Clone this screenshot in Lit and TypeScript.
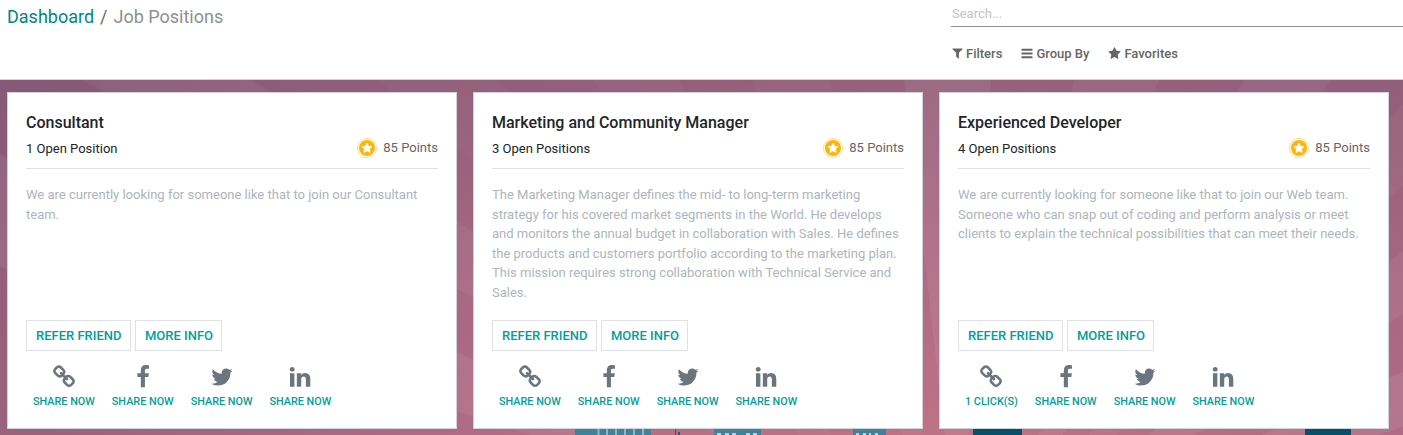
import { LitElement, html, svg, css } from "lit";
import { customElement, property } from "lit/decorators.js";

const ICONS: Record<string, string> = {
  link: "M1520 1216q0-40-28-68l-208-208q-28-28-68-28-42 0-72 32 3 3 19 18.5t21.5 21.5 15 19 13 25.5 3.5 27.5q0 40-28 68t-68 28q-15 0-27.5-3.5t-25.5-13-19-15-21.5-21.5-18.5-19q-33 31-33 73 0 40 28 68l206 207q27 27 68 27 40 0 68-26l147-146q28-28 28-67zm-703-705q0-40-28-68l-206-207q-28-28-68-28-39 0-68 27l-147 146q-28 28-28 67 0 40 28 68l208 208q27 27 68 27 42 0 72-31-3-3-19-18.5t-21.5-21.5-15-19-13-25.5-3.5-27.5q0-40 28-68t68-28q15 0 27.5 3.5t25.5 13 19 15 21.5 21.5 18.5 19q33-31 33-73zm895 705q0 120-85 203l-147 146q-83 83-203 83-121 0-204-85l-206-207q-83-83-83-203 0-123 88-209l-88-88q-86 88-208 88-120 0-204-84l-208-208q-84-84-84-204t85-203l147-146q83-83 203-83 121 0 204 85l206 207q83 83 83 203 0 123-88 209l88 88q86-88 208-88 120 0 204 84l208 208q84 84 84 204z",
  facebook: "M1343 12v264h-157q-86 0-116 36t-30 108v189h293l-39 296h-254v759h-306v-759h-255v-296h255v-218q0-186 104-288.5t277-102.5q147 0 228 12z",
  twitter: "M1684 408q-67 98-162 167 1 14 1 42 0 130-38 259.5t-115.5 248.5-184.5 210.5-258 146-323 54.5q-271 0-496-145 35 4 78 4 225 0 401-138-105-2-188-64.5t-114-159.5q33 5 61 5 43 0 85-11-112-23-185.5-111.5t-73.5-205.5v-4q68 38 146 41-66-44-105-115t-39-154q0-88 44-163 121 149 294.5 238.5t371.5 99.5q-8-38-8-74 0-134 94.5-228.5t228.5-94.5q140 0 236 102 109-21 205-78-37 115-142 178 93-10 186-50z",
  linkedin: "M477 625v991h-330v-991h330zm21-306q1 73-50.5 122t-135.5 49h-2q-82 0-132-49t-50-122q0-74 51.5-122.5t134.5-48.5 133 48.5 51 122.5zm1166 729v568h-329v-530q0-105-40.5-164.5t-126.5-59.5q-63 0-105.5 34.5t-63.5 85.5q-11 30-11 81v553h-329q2-399 2-647t-1-296l-1-48h329v144h-2q20-32 41-56t56.5-52 87-43.5 114.5-15.5q171 0 275 113.5t104 332.5z",
  filter: "M1595 295q17 41-14 70l-493 493v742q0 42-39 59-13 5-25 5-27 0-45-19l-256-256q-19-19-19-45v-486l-493-493q-31-29-14-70 17-39 59-39h1280q42 0 59 39z",
  bars: "M1664 1344v128q0 26-19 45t-45 19h-1408q-26 0-45-19t-19-45v-128q0-26 19-45t45-19h1408q26 0 45 19t19 45zm0-512v128q0 26-19 45t-45 19h-1408q-26 0-45-19t-19-45v-128q0-26 19-45t45-19h1408q26 0 45 19t19 45zm0-512v128q0 26-19 45t-45 19h-1408q-26 0-45-19t-19-45v-128q0-26 19-45t45-19h1408q26 0 45 19t19 45z",
  star: "M1728 647q0 22-26 48l-363 354 86 500q1 7 1 20 0 21-10.5 35.5t-30.5 14.5q-19 0-40-12l-449-236-449 236q-22 12-40 12-21 0-31.5-14.5t-10.5-35.5q0-6 2-20l86-500-364-354q-25-27-25-48 0-37 56-46l502-73 225-455q19-41 49-41t49 41l225 455 502 73q56 9 56 46z",
};

// Horizontal extent of each toolbar glyph inside its 1792-unit em.
const BOXES: Record<string, string> = {
  filter: "192 64 1408 1792",
  bars: "128 0 1536 1792",
  star: "64 0 1664 1792",
};

const icon = (name: string) => html`
  <svg class="icon ${name}" viewBox=${BOXES[name] ?? "0 0 1792 1792"} aria-hidden="true">
    ${svg`<path fill="currentColor" d=${ICONS[name]}></path>`}
  </svg>
`;

interface Job {
  title: string;
  open: string;
  text: string;
  linkLabel: string;
}

const JOBS: Job[] = [
  {
    title: "Consultant",
    open: "1 Open Position",
    text: "We are currently looking for someone like that to join our Consultant team.",
    linkLabel: "SHARE NOW",
  },
  {
    title: "Marketing and Community Manager",
    open: "3 Open Positions",
    text: "The Marketing Manager defines the mid- to long-term marketing strategy for his covered market segments in the World. He develops and monitors the annual budget in collaboration with Sales. He defines the products and customers portfolio according to the marketing plan. This mission requires strong collaboration with Technical Service and Sales.",
    linkLabel: "SHARE NOW",
  },
  {
    title: "Experienced Developer",
    open: "4 Open Positions",
    text: "We are currently looking for someone like that to join our Web team. Someone who can snap out of coding and perform analysis or meet clients to explain the technical possibilities that can meet their needs.",
    linkLabel: "1 CLICK(S)",
  },
];

@customElement("job-card")
class JobCard extends LitElement {
  @property({ attribute: false }) job!: Job;

  static styles = css`
    :host {
      display: flex;
      flex-direction: column;
      box-sizing: border-box;
      height: 337px;
      padding: 18px;
      border: 1px solid #ced4da;
      background: #fff;
      font: 13px/19.5px Roboto, sans-serif;
      color: #212529;
    }
    .title {
      margin: 2px 0 0;
      font-size: 16px;
      line-height: 20px;
      font-weight: 500;
    }
    .meta {
      display: flex;
      justify-content: space-between;
      align-items: center;
      height: 34px;
      padding-bottom: 1px;
      border-bottom: 1px solid #dee2e6;
    }
    .open { padding-bottom: 3px; }
    .points {
      display: flex;
      align-items: center;
      gap: 6.5px;
      color: #666;
      padding-bottom: 4px;
    }
    .badge { width: 20px; height: 20px; }
    .text {
      flex: 1;
      margin: 16px 0 0;
      color: #adb5bd;
    }
    .actions { display: flex; gap: 4px; }
    .button {
      box-sizing: border-box;
      height: 31px;
      padding: 0 8.4px 0 9px;
      border: 1px solid #dee2e6;
      background: #fff;
      color: #00a09d;
      font: 500 13px/29px Roboto, sans-serif;
    }
    .shares {
      display: flex;
      gap: 3px;
      padding: 13.5px 0 0;
      height: 45.5px;
    }
    .share {
      display: flex;
      flex-direction: column;
      align-items: center;
      padding: 0 7px;
      color: #6c757d;
    }
    .icon { display: block; width: 24px; height: 24px; }
    .label {
      margin-top: 5.5px;
      color: #00a09d;
      font-size: 10.83px;
      line-height: 16px;
      font-weight: 500;
    }
  `;

  render() {
    const { title, open, text, linkLabel } = this.job;
    const shares = [
      ["link", linkLabel],
      ["facebook", "SHARE NOW"],
      ["twitter", "SHARE NOW"],
      ["linkedin", "SHARE NOW"],
    ];
    return html`
      <h5 class="title">${title}</h5>
      <div class="meta">
        <span class="open">${open}</span>
        <span class="points">
          <svg class="badge" viewBox="0 0 20 20" aria-hidden="true">
            <circle cx="10" cy="10" r="9.5" fill="#fff" stroke="#fcd978" stroke-width=".9"></circle>
            <circle cx="10" cy="10" r="8" fill="#fdb60d"></circle>
            <path d="M10 5.300l1.45 3 3.300.45-2.400 2.300.6 3.300L10 12.750l-2.950 1.600.6-3.300-2.400-2.300 3.300-.45z"
              fill="#fff" stroke="#fff" stroke-width=".9" stroke-linejoin="round"></path>
          </svg>
          85 Points
        </span>
      </div>
      <p class="text">${text}</p>
      <div class="actions">
        <button class="button">REFER FRIEND</button>
        <button class="button">MORE INFO</button>
      </div>
      <div class="shares">
        ${shares.map(([name, label]) => html`
          <div class="share">${icon(name)}<span class="label">${label}</span></div>
        `)}
      </div>
    `;
  }
}

@customElement("app-root")
class AppRoot extends LitElement {
  static styles = css`
    :host {
      display: flex;
      flex-direction: column;
      height: 435px;
      overflow: hidden;
      background: #fff;
      font: 13px/20px Roboto, sans-serif;
      color: #666;
    }
    .panel {
      box-sizing: border-box;
      flex: none;
      display: grid;
      grid-template-columns: 951px 1fr;
      height: 80px;
      border-bottom: 1px solid #ced4da;
    }
    .crumbs {
      display: flex;
      padding: 4px 0 0 7px;
      font-size: 18px;
      line-height: 26px;
    }
    .crumb { color: #008784; }
    .slash { padding: 0 6px; }
    .current { color: #8f8f8f; }
    .search {
      box-sizing: border-box;
      height: 27px;
      padding: 4px 1px 0;
      border-bottom: 1px solid #8f8f8f;
      color: #c4c4c4;
    }
    .options {
      display: flex;
      gap: 19px;
      padding: 17px 0 0 1px;
      font-weight: 500;
    }
    .option { display: flex; align-items: center; gap: 3px; }
    .icon { display: block; height: 13px; margin-bottom: 1px; }
    .filter { width: 11px; }
    .bars { width: 12px; }
    .star { width: 13px; }
    .scene {
      flex: 1;
      display: grid;
      grid-template: 355px / 1403px;
    }
    .backdrop, .cards { grid-area: 1 / 1; }
    .backdrop {
      display: flex;
      align-items: flex-end;
      background:
        conic-gradient(from -90deg at 960px 490px,
          transparent 17.4deg, #ffffff10 17.6deg 23.3deg, transparent 23.5deg 29.1deg,
          #ffffff0c 29.3deg 34.6deg, transparent 34.8deg 40deg, #ffffff05 40.2deg 46.5deg,
          transparent 46.7deg 53deg, #ffffff05 53.2deg 60deg, transparent 60.2deg 67deg,
          #ffffff06 67.2deg 75deg, transparent 75.2deg 83.4deg, #ffffff10 83.6deg 93.5deg,
          transparent 93.7deg 103deg, #ffffff0c 103.2deg 112deg, transparent 112.2deg 120deg,
          #ffffff0c 120.2deg 127deg, transparent 127.2deg 133.5deg, #ffffff08 133.7deg 139deg,
          transparent 139.2deg 144.2deg, #ffffff0e 144.4deg 149.9deg, transparent 150.1deg 155.8deg,
          #ffffff12 156deg 162deg, transparent 162.2deg),
        radial-gradient(1400px 540px at 930px 380px, #c07385 0%, #ae6b83 35%, #98617c 68%, #845676 100%);
    }
    .city { display: block; width: 1403px; height: 6px; }
    .cards {
      display: grid;
      grid-template-columns: repeat(3, 450px);
      gap: 16px;
      align-content: start;
      padding: 12px 0 0 7px;
    }
  `;

  render() {
    return html`
      <header class="panel">
        <nav class="crumbs">
          <span class="crumb">Dashboard</span><span class="slash">/</span><span class="current">Job Positions</span>
        </nav>
        <div>
          <div class="search">Search...</div>
          <div class="options">
            <span class="option">${icon("filter")}Filters</span>
            <span class="option">${icon("bars")}Group By</span>
            <span class="option">${icon("star")}Favorites</span>
          </div>
        </div>
      </header>
      <main class="scene">
        <div class="backdrop">
          <svg class="city" viewBox="0 429 1403 6" aria-hidden="true">
            <path fill="#43819a" d="M575 429h76v6h-76zM714 429h47v6h-47zM853 429h33v6h-33z"></path>
            <path stroke="#8fb6c8" stroke-width="2" d="M598.500 429v6M607 429v6M616 429v6M625 429v6M634 429v6M643 429v6"></path>
            <path fill="#b9d2dd" d="M717 433h4v2h-4zM725 433h4v2h-4zM732 433h4v2h-4zM746 433h4v2h-4zM753 433h4v2h-4zM856 433h3v2h-3zM863 433h3v2h-3zM869 433h2v2h-2zM875 433h3v2h-3z"></path>
            <path fill="#44506c" d="M675 429h1v6h-1zM678 432h2v3h-2z"></path>
            <path fill="#0a4d68" d="M973 429h49v6h-49zM1305 429h46v6h-46z"></path>
          </svg>
        </div>
        <div class="cards">
          ${JOBS.map((job) => html`<job-card .job=${job}></job-card>`)}
        </div>
      </main>
    `;
  }
}
